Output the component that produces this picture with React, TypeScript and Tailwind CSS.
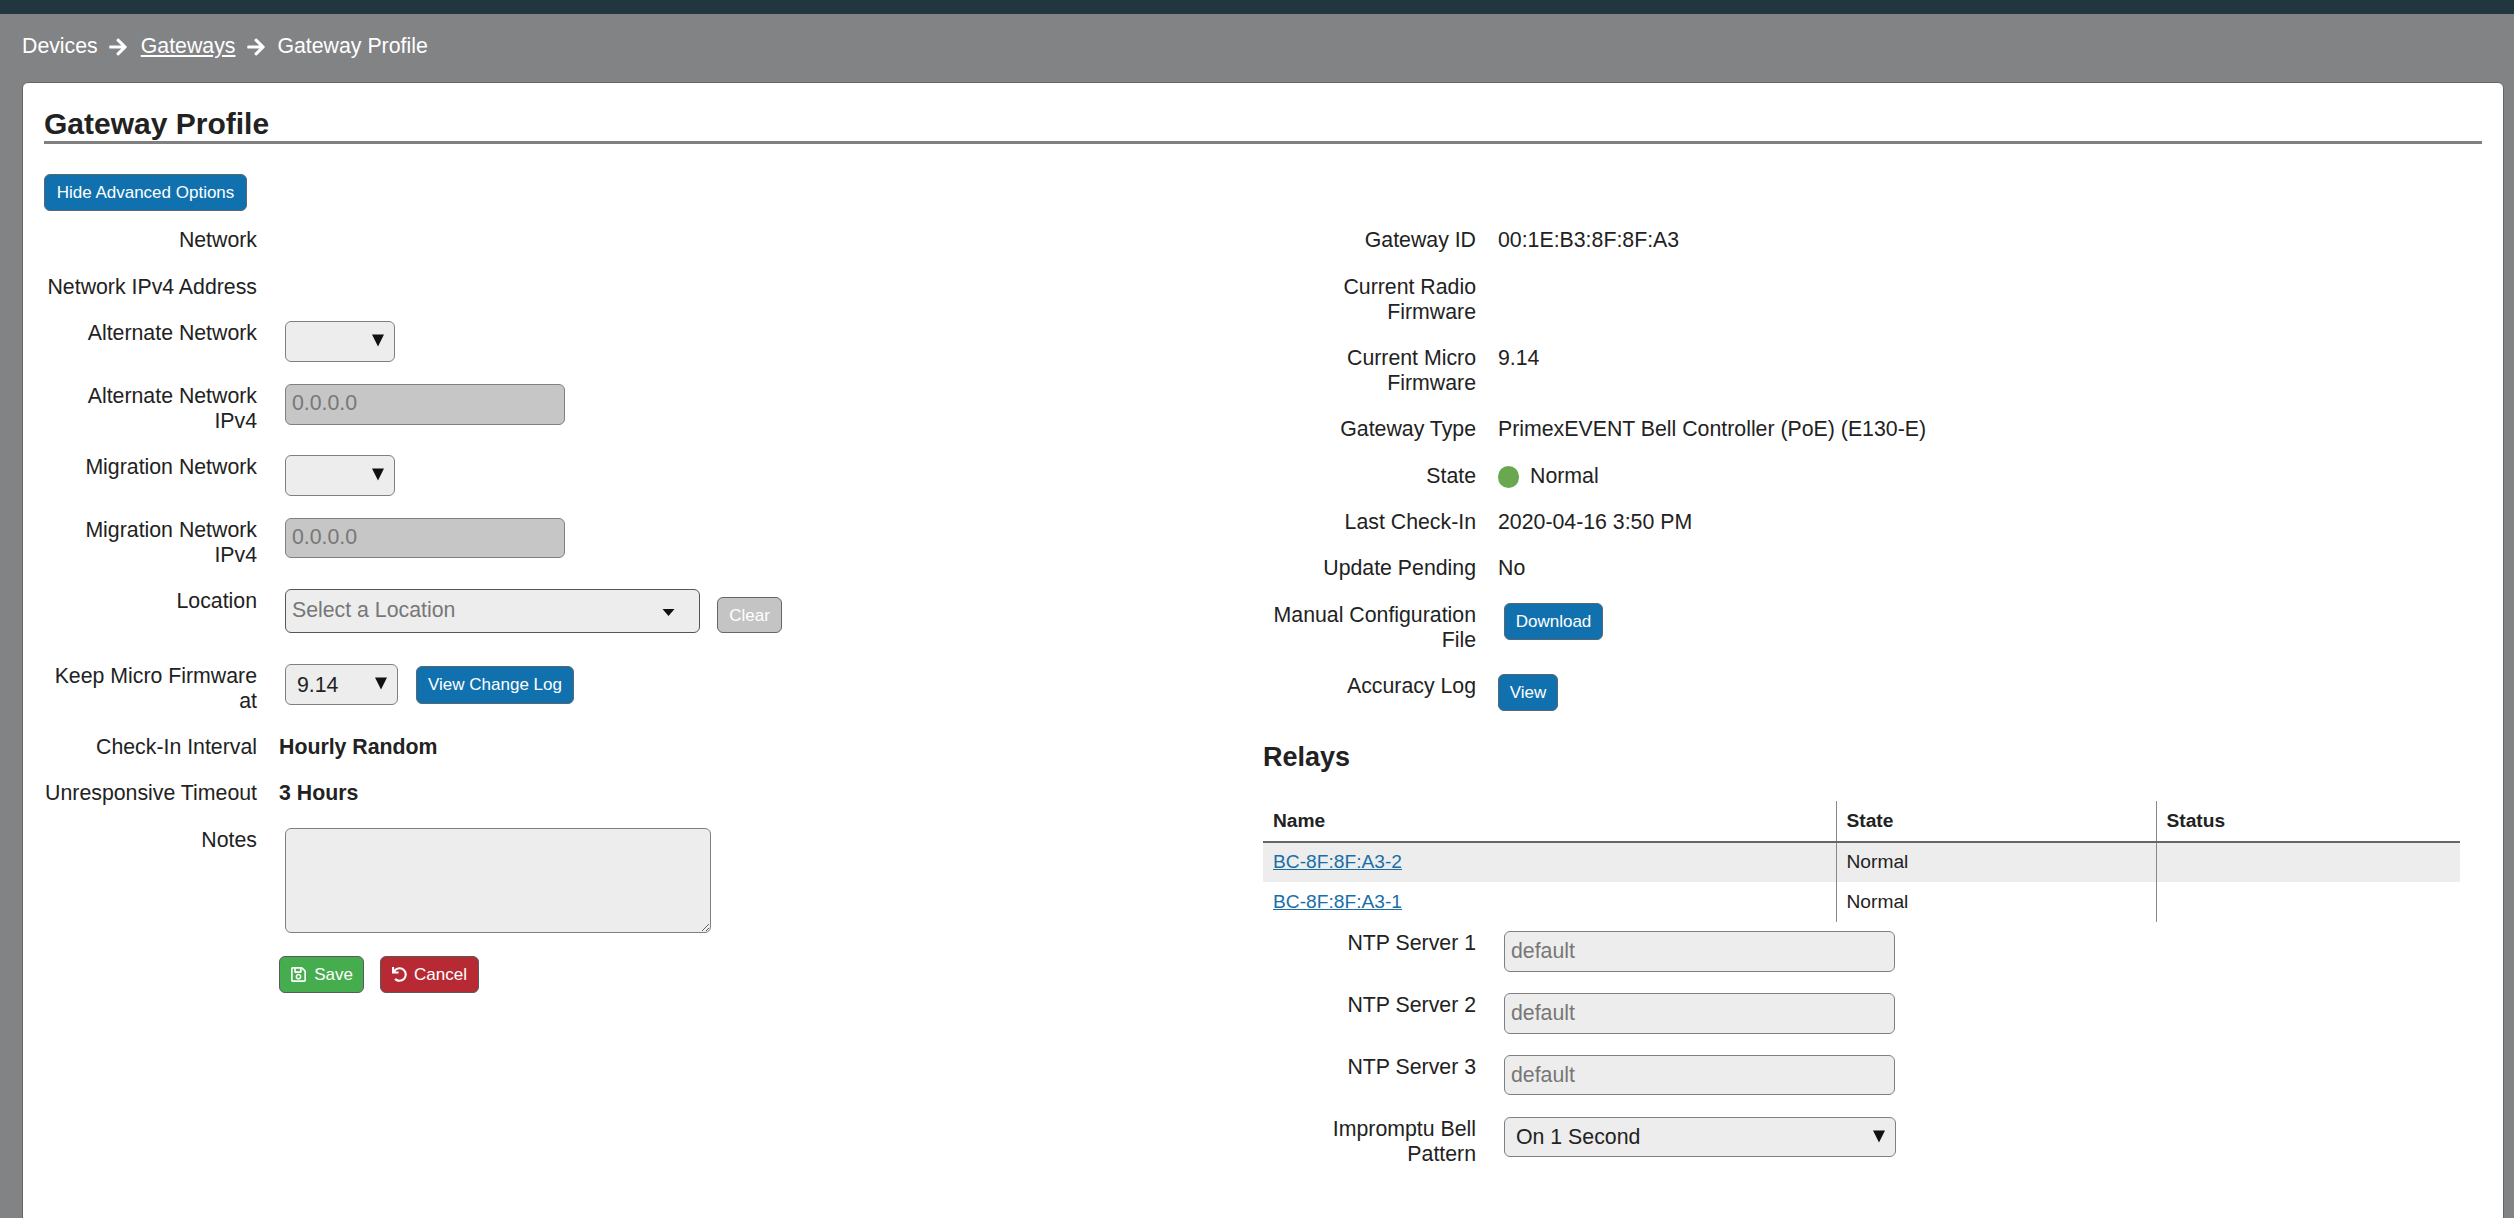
import type { ReactNode } from 'react';
import { FaArrowRight, FaRegSave, FaUndo } from 'react-icons/fa';

const FONT = "font-['Liberation_Sans',Arial,sans-serif]";
const BLUE_BUTTON =
  'rounded-[6px] border border-[#5a6770] bg-[#1071ae] text-[17px] leading-5 text-white';
const FIELD =
  'rounded-[6px] border border-[#808080] bg-[#ededed] px-[6px] text-[21.3px] text-[#222] outline-none placeholder:text-[#777]';

function Row({ label, className = '', children }: { label: string; className?: string; children?: ReactNode }) {
  return (
    <div className={`flex items-start ${className}`}>
      <div className="w-[213px] shrink-0 text-right text-[21.3px] leading-[25px]">{label}</div>
      <div className="ml-[22px] flex min-h-[25px] items-start text-[21.3px] leading-[25px]">{children}</div>
    </div>
  );
}

function Arrow() {
  return (
    <svg viewBox="0 0 12 12" className="pointer-events-none absolute right-[11px] top-[13px] h-[13px] w-[12px]">
      <polygon points="0,0 12,0 6,12" fill="#111" />
    </svg>
  );
}

function Select({ value, className, selectClass = '' }: { value: string; className: string; selectClass?: string }) {
  return (
    <div className={`relative ${className}`}>
      <select className={`${FIELD} h-full w-full appearance-none pl-[11px] ${selectClass}`} defaultValue={value}>
        <option value={value}>{value}</option>
      </select>
      <Arrow />
    </div>
  );
}

function SmallInput({ placeholder, className }: { placeholder: string; className: string }) {
  return <input placeholder={placeholder} className={`${FIELD} ${className}`} />;
}

export default function App() {
  return (
    <div className={`${FONT} flex h-screen flex-col overflow-hidden bg-[#828385] text-[#222]`}>
      <div className="h-[14px] shrink-0 bg-[#22363f]" />

      <nav className="flex h-[68px] shrink-0 items-center pb-[3px] pl-[22px] text-[21.3px] text-white">
        <span>Devices</span>
        <FaArrowRight className="ml-[10px] mr-[13px] text-[20px]" />
        <a className="underline">Gateways</a>
        <FaArrowRight className="ml-[11px] mr-[11px] text-[20px]" />
        <span>Gateway Profile</span>
      </nav>

      <main className="ml-[22px] mr-[10px] min-h-[1200px] shrink-0 rounded-[6px] border border-[#666] bg-white px-[21px]">
        <h1 className="mt-[24px] h-[34px] text-[30px] font-bold leading-[34px]">Gateway Profile</h1>
        <div className="h-[3px] bg-[#808080]" />

        <button className={`${BLUE_BUTTON} mt-[30px] block h-[37px] w-[203px]`}>Hide Advanced Options</button>

        <div className="mt-[17px] flex">
          <section className="w-[1219px] shrink-0">
            <Row label="Network" className="mb-[22px]" />
            <Row label="Network IPv4 Address" className="mb-[21px]" />
            <Row label="Alternate Network" className="mb-[22px]">
              <Select value="" className="ml-[6px] h-[41px] w-[110px]" />
            </Row>
            <Row label="Alternate Network IPv4" className="mb-[21px]">
              <SmallInput placeholder="0.0.0.0" className="ml-[6px] h-[41px] w-[280px] !bg-[#c6c6c6] pb-[2px]" />
            </Row>
            <Row label="Migration Network" className="mb-[22px]">
              <Select value="" className="ml-[6px] h-[41px] w-[110px]" />
            </Row>
            <Row label="Migration Network IPv4" className="mb-[21px]">
              <SmallInput placeholder="0.0.0.0" className="ml-[6px] h-[40px] w-[280px] !bg-[#c6c6c6] pb-[2px]" />
            </Row>
            <Row label="Location" className="mb-[31px]">
              <div className="relative ml-[6px] flex h-[44px] w-[415px] items-center rounded-[6px] border border-[#555] bg-[#ededed] pb-[2px] pl-[6px] text-[#777]">
                Select a Location
                <svg viewBox="0 0 12 7" className="absolute right-[24px] top-[19px] h-[7px] w-[13px]">
                  <polygon points="0,0 12,0 6,7" fill="#111" />
                </svg>
              </div>
              <button className="ml-[17px] mt-[8px] h-[36px] w-[65px] rounded-[6px] border border-[#666] bg-[#c4c4c4] text-[17px] text-white">
                Clear
              </button>
            </Row>
            <Row label="Keep Micro Firmware at" className="mb-[21px]">
              <Select value="9.14" className="ml-[6px] h-[41px] w-[113px]" selectClass="pt-[2px]" />
              <button className={`${BLUE_BUTTON} ml-[18px] mt-[2px] h-[38px] w-[158px]`}>View Change Log</button>
            </Row>
            <Row label="Check-In Interval" className="mb-[21px]">
              <b>Hourly Random</b>
            </Row>
            <Row label="Unresponsive Timeout" className="mb-[22px]">
              <b>3 Hours</b>
            </Row>
            <Row label="Notes" className="mb-[23px]">
              <textarea className={`${FIELD} ml-[6px] block h-[105px] w-[426px]`} />
            </Row>
            <div className="ml-[235px] flex gap-[16px]">
              <button className="flex h-[37px] w-[85px] items-center justify-center gap-[7px] rounded-[6px] border border-[#5a5a5a] bg-[#46ad4e] text-[17px] text-white">
                <FaRegSave className="text-[17px]" />
                Save
              </button>
              <button className="flex h-[37px] w-[99px] items-center justify-center gap-[7px] rounded-[6px] border border-[#5a5a5a] bg-[#b72a33] text-[17px] text-white">
                <FaUndo className="text-[15px]" />
                Cancel
              </button>
            </div>
          </section>

          <section className="w-[1197px] shrink-0">
            <Row label="Gateway ID" className="mb-[22px]">00:1E:B3:8F:8F:A3</Row>
            <Row label="Current Radio Firmware" className="mb-[21px]" />
            <Row label="Current Micro Firmware" className="mb-[21px]">9.14</Row>
            <Row label="Gateway Type" className="mb-[22px]">PrimexEVENT Bell Controller (PoE) (E130-E)</Row>
            <Row label="State" className="mb-[21px]">
              <span className="mr-[11px] mt-[2px] h-[22px] w-[21px] rounded-full bg-[#6aa84f]" />
              Normal
            </Row>
            <Row label="Last Check-In" className="mb-[21px]">2020-04-16 3:50 PM</Row>
            <Row label="Update Pending" className="mb-[22px]">No</Row>
            <Row label="Manual Configuration File" className="mb-[21px]">
              <button className={`${BLUE_BUTTON} ml-[6px] h-[37px] w-[99px]`}>Download</button>
            </Row>
            <Row label="Accuracy Log" className="mb-[31px]">
              <button className={`${BLUE_BUTTON} h-[37px] w-[60px]`}>View</button>
            </Row>

            <h2 className="h-[30px] text-[27px] font-bold leading-[30px]">Relays</h2>

            <table className="mb-[9px] mt-[29px] w-[1197px] table-fixed border-collapse text-[19.2px]">
              <colgroup>
                <col className="w-[573px]" />
                <col className="w-[320px]" />
                <col className="w-[304px]" />
              </colgroup>
              <thead>
                <tr className="h-[41px] border-b-2 border-[#666] text-left">
                  <th className="pl-[10px] font-bold">Name</th>
                  <th className="border-l border-[#888] pl-[10px] font-bold">State</th>
                  <th className="border-l border-[#888] pl-[10px] font-bold">Status</th>
                </tr>
              </thead>
              <tbody>
                <tr className="h-[40px] bg-[#ededed]">
                  <td className="pl-[10px]"><a className="text-[#1a6ea8] underline">BC-8F:8F:A3-2</a></td>
                  <td className="border-l border-[#888] pl-[10px]">Normal</td>
                  <td className="border-l border-[#888]" />
                </tr>
                <tr className="h-[40px]">
                  <td className="pl-[10px]"><a className="text-[#1a6ea8] underline">BC-8F:8F:A3-1</a></td>
                  <td className="border-l border-[#888] pl-[10px]">Normal</td>
                  <td className="border-l border-[#888]" />
                </tr>
              </tbody>
            </table>

            <Row label="NTP Server 1" className="mb-[21px]">
              <SmallInput placeholder="default" className="ml-[6px] h-[41px] w-[391px]" />
            </Row>
            <Row label="NTP Server 2" className="mb-[21px]">
              <SmallInput placeholder="default" className="ml-[6px] h-[41px] w-[391px]" />
            </Row>
            <Row label="NTP Server 3" className="mb-[22px]">
              <SmallInput placeholder="default" className="ml-[6px] h-[40px] w-[391px]" />
            </Row>
            <Row label="Impromptu Bell Pattern">
              <Select value="On 1 Second" className="ml-[6px] h-[40px] w-[392px]" />
            </Row>
          </section>
        </div>
      </main>
    </div>
  );
}
